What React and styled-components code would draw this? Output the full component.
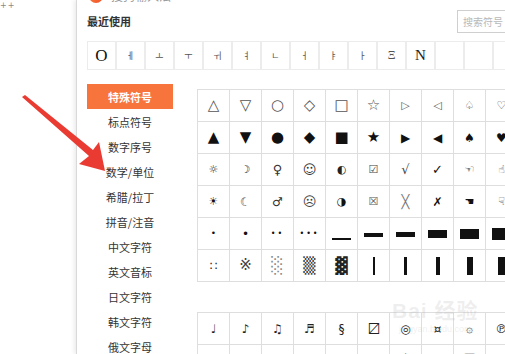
import React from "react";
import styled, { createGlobalStyle } from "styled-components";

const GlobalStyle = createGlobalStyle`
  html, body {
    margin: 0;
    padding: 0;
    background: #ffffff;
    overflow: hidden;
  }
  body {
    font-family: "Noto Sans CJK SC", "Noto Sans", sans-serif;
  }
`;

const Page = styled.div`
  position: relative;
  width: 505px;
  height: 354px;
  display: flex;
  overflow: hidden;
  background: #fff;
`;

const Gutter = styled.div`
  width: 76px;
  flex-shrink: 0;
  padding: 1px 0 0 0;
  font-family: "DejaVu Sans", sans-serif;
  font-size: 8px;
  color: #888;
  letter-spacing: 1px;
`;

const Panel = styled.div`
  flex: 1;
  min-width: 0;
  display: flex;
  flex-direction: column;
  padding-left: 10px;
  border-left: 1px solid #d9d9d9;
  box-shadow: -2px 0 4px rgba(0, 0, 0, 0.08);
  overflow: hidden;
`;

const TopBar = styled.div`
  margin-top: -13px;
  height: 17px;
  display: flex;
  align-items: center;
  gap: 8px;
  padding-left: 2px;
`;

const Logo = styled.div`
  width: 14px;
  height: 14px;
  border-radius: 50%;
  background: linear-gradient(135deg, #ff8a3d, #f0502a);
`;

const TopTitle = styled.div`
  font-size: 12px;
  color: #999;
`;

const RecentHeader = styled.div`
  margin-top: 6px;
  height: 23px;
  display: flex;
  align-items: center;
  justify-content: space-between;
`;

const Label = styled.div`
  font-size: 11px;
  font-weight: 700;
  color: #333;
  padding-bottom: 1px;
`;

const Search = styled.div`
  width: 60px;
  height: 21px;
  margin-right: -19px;
  border: 1px solid #cfcfcf;
  display: flex;
  align-items: center;
  padding-left: 5px;
  font-size: 10px;
  color: #b8b8b8;
  white-space: nowrap;
  overflow: hidden;
`;

const RecentRow = styled.div`
  margin-top: 8px;
  display: flex;
`;

const RecentCell = styled.div`
  width: 29px;
  height: 29px;
  flex-shrink: 0;
  box-sizing: border-box;
  border: 1px solid #ececec;
  display: flex;
  align-items: center;
  justify-content: center;
  font-family: ${(p) => (p.serif ? '"Liberation Serif", serif' : '"Noto Sans CJK KR", "DejaVu Sans", sans-serif')};
  font-size: ${(p) => p.size || 9}px;
  color: ${(p) => p.color || "#555"};
`;

const Body = styled.div`
  margin-top: 14px;
  display: flex;
  gap: 24px;
`;

const Sidebar = styled.div`
  width: 86px;
  flex-shrink: 0;
  display: flex;
  flex-direction: column;
`;

const Category = styled.div`
  height: 25px;
  display: flex;
  align-items: center;
  justify-content: center;
  font-size: 11px;
  color: ${(p) => (p.active ? "#fff" : "#333")};
  background: ${(p) => (p.active ? "#f7743d" : "transparent")};
  font-weight: ${(p) => (p.active ? 700 : 400)};
`;

const Grids = styled.div`
  margin-top: 5px;
  display: flex;
  flex-direction: column;
  gap: 30px;
`;

const SymbolGrid = styled.div`
  display: grid;
  grid-template-columns: repeat(10, 32px);
  grid-auto-rows: 32px;
  border-top: 1px solid #dedede;
  border-left: 1px solid #dedede;
  width: max-content;
`;

const Cell = styled.div`
  box-sizing: border-box;
  border-right: 1px solid #dedede;
  border-bottom: 1px solid #dedede;
  display: flex;
  align-items: center;
  justify-content: center;
  font-family: "DejaVu Sans", sans-serif;
  font-size: ${(p) => p.size || 13}px;
  color: ${(p) => p.color || "#222"};
  line-height: 1;
  letter-spacing: ${(p) => p.spacing || 0}px;
`;

const HBar = styled.div`
  width: 19px;
  background: #111;
  margin-top: ${(p) => p.offset || 0}px;
`;

const VBar = styled.div`
  height: 18px;
  background: #111;
`;

const Arrow = styled.svg`
  position: absolute;
  left: 0;
  top: 0;
  pointer-events: none;
`;

const Watermark = styled.div`
  position: absolute;
  left: 392px;
  top: 300px;
  display: flex;
  flex-direction: column;
  align-items: center;
  color: rgba(180, 180, 180, 0.22);
  font-family: "Liberation Sans", "Noto Sans CJK SC", sans-serif;
  pointer-events: none;
`;

const WmTitle = styled.div`
  font-size: 21px;
  font-weight: 700;
  line-height: 1;
  letter-spacing: 1px;
`;

const WmUrl = styled.div`
  font-size: 9px;
  margin-top: 3px;
`;

const recent = [
  { c: "O", size: 17, color: "#111", serif: true },
  { c: "ㅔ" },
  { c: "ㅗ" },
  { c: "ㅜ" },
  { c: "ㅟ" },
  { c: "ㅕ" },
  { c: "ㄴ" },
  { c: "ㅓ" },
  { c: "ㅑ" },
  { c: "ㅏ" },
  { c: "Ξ", size: 12, serif: true },
  { c: "N", size: 15, color: "#222", serif: true },
  { c: "" },
  { c: "" },
  { c: "" },
];

const categories = [
  "特殊符号",
  "标点符号",
  "数字序号",
  "数学/单位",
  "希腊/拉丁",
  "拼音/注音",
  "中文字符",
  "英文音标",
  "日文字符",
  "韩文字符",
  "俄文字母",
];

const g = "#555";
const k = "#111";

const grid1 = [
  [["△", 15, g], ["▽", 15, g], ["○", 15, g], ["◇", 15, g], ["□", 15, g], ["☆", 15, g], ["▷", 11, g], ["◁", 11, g], ["♤", 11, g], ["♡", 11, g]],
  [["▲", 15, k], ["▼", 15, k], ["●", 15, k], ["◆", 15, k], ["■", 15, k], ["★", 15, k], ["▶", 12, k], ["◀", 12, k], ["♠", 12, k], ["♥", 12, k]],
  [["☼", 11, "#333"], ["☽", 11, "#333"], ["♀", 13, "#333"], ["☺", 13, "#333"], ["◐", 11, "#222"], ["☑", 11, "#444"], ["√", 13, "#444"], ["✓", 13, k], ["☜", 11, k], ["☝", 11, "#333"]],
  [["☀", 11, k], ["☾", 12, "#444"], ["♂", 12, "#333"], ["☹", 13, "#444"], ["◑", 11, k], ["☒", 11, "#555"], ["╳", 13, "#777"], ["✗", 12, k], ["☚", 11, k], ["☟", 11, "#444"]],
];

const hbars = [
  { h: 2, offset: 10 },
  { h: 4, offset: 3 },
  { h: 5, offset: 2 },
  { h: 8, offset: 0 },
  { h: 10, offset: 0 },
  { h: 12, offset: 0 },
];

const vbars = [2, 3, 4, 6, 8];

const grid2 = [
  ["♩", "♪", "♫", "♬", "§", "〼", "◎", "¤", "۞", "℗"],
  ["↖", "↗", "↙", "↘", "¶", "┐", "╰", "═", "▀", "℡"],
];

export default function App() {
  return (
    <>
      <GlobalStyle />
      <Page>
        <Gutter>++</Gutter>
        <Panel>
          <TopBar>
            <Logo />
            <TopTitle>搜狗输入法</TopTitle>
          </TopBar>
          <RecentHeader>
            <Label>最近使用</Label>
            <Search>搜索符号</Search>
          </RecentHeader>
          <RecentRow>
            {recent.map((r, i) => (
              <RecentCell key={i} size={r.size} color={r.color} serif={r.serif}>
                {r.c}
              </RecentCell>
            ))}
          </RecentRow>
          <Body>
            <Sidebar>
              {categories.map((name, i) => (
                <Category key={name} active={i === 0}>
                  {name}
                </Category>
              ))}
            </Sidebar>
            <Grids>
              <SymbolGrid>
                {grid1.flat().map(([c, size, color], i) => (
                  <Cell key={i} size={size} color={color}>
                    {c}
                  </Cell>
                ))}
                <Cell size={9} color="#111">•</Cell>
                <Cell size={12} color="#111">•</Cell>
                <Cell size={8} color="#111" spacing={2}>••</Cell>
                <Cell size={8} color="#111" spacing={2}>•••</Cell>
                {hbars.map((b, i) => (
                  <Cell key={"h" + i}>
                    <HBar offset={b.offset} style={{ height: b.h }} />
                  </Cell>
                ))}
                <Cell size={12} color="#222">∷</Cell>
                <Cell size={15} color="#444">※</Cell>
                <Cell size={16} color="#888">░</Cell>
                <Cell size={16} color="#444">▒</Cell>
                <Cell size={16} color="#222">▓</Cell>
                {vbars.map((w, i) => (
                  <Cell key={"v" + i}>
                    <VBar style={{ width: w }} />
                  </Cell>
                ))}
              </SymbolGrid>
              <SymbolGrid>
                {grid2.flat().map((c, i) => (
                  <Cell key={i} size={12} color="#222">
                    {c}
                  </Cell>
                ))}
              </SymbolGrid>
            </Grids>
          </Body>
        </Panel>
        <Arrow width="505" height="354" viewBox="0 0 505 354">
          <polygon
            points="22,97 25,95 93,150 99,142 105,171 79,164 89,156"
            fill="#ea3b33"
          />
        </Arrow>
        <Watermark>
          <WmTitle>Bai 经验</WmTitle>
          <WmUrl>jingyan.baidu.com</WmUrl>
        </Watermark>
      </Page>
    </>
  );
}
